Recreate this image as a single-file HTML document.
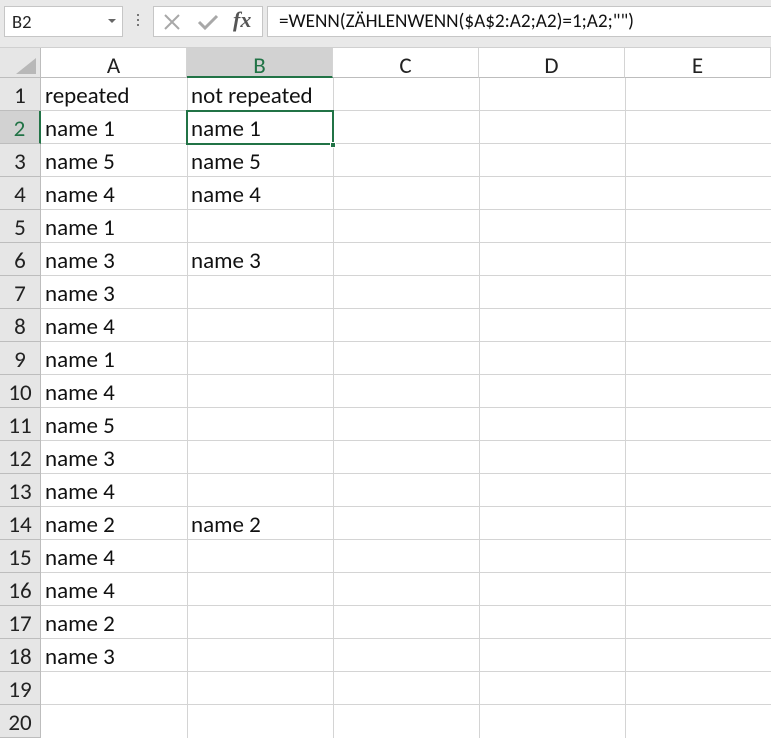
<!DOCTYPE html>
<html><head><meta charset="utf-8"><style>
*{margin:0;padding:0;box-sizing:border-box}
body{width:771px;height:738px;overflow:hidden;background:#fff;font-family:Calibri,"Liberation Sans","DejaVu Sans",sans-serif;position:relative}
.top{position:absolute;left:0;top:0;width:771px;height:48px;background:#e9e9e9;border-bottom:1px solid #d0d0d0}
.box{position:absolute;background:#fff;border:1px solid #c6c6c6}
.a{position:absolute}
.ch{position:absolute;top:48px;height:30px;border-right:1px solid #d4d4d4;border-bottom:1px solid #bdbdbd;text-align:center;font-size:23px;line-height:36px;color:#222;background:#fff}
.rh{position:absolute;left:0;width:41px;height:33px;background:#e6e6e6;border-bottom:1px solid #bdbdbd;border-right:1px solid #bdbdbd;text-align:center;font-size:23px;line-height:37px;color:#222}
.hl{position:absolute;left:41px;width:730px;height:1px;background:#d4d4d4}
.vl{position:absolute;top:78px;width:1px;height:660px;background:#d4d4d4}
.t{position:absolute;font-size:23px;line-height:37px;color:#111;white-space:nowrap}
</style></head><body>
<div class="top"></div>
<div class="box" style="left:4px;top:6px;width:119px;height:31px"><span class="a" style="left:7px;top:3px;font-size:18.5px;color:#222">B2</span><span class="a" style="right:6px;top:12px;width:0;height:0;border-left:4px solid transparent;border-right:4px solid transparent;border-top:4px solid #666"></span></div>
<div class="a" style="left:137px;top:14px;width:2px;height:2px;background:#777;box-shadow:0 5px 0 #777,0 10px 0 #777"></div>
<div class="box" style="left:153px;top:6px;width:110px;height:31px">
<svg class="a" style="left:9px;top:6px" width="18" height="18"><path d="M2 2L16 16M16 2L2 16" stroke="#a8a8a8" stroke-width="2"/></svg>
<svg class="a" style="left:43px;top:6px" width="22" height="18"><path d="M2 9L8 15L20 3" stroke="#a8a8a8" stroke-width="3" fill="none"/></svg>
<span class="a" style="left:79px;top:0px;font-family:'Liberation Serif',serif;font-style:italic;font-weight:bold;font-size:22px;color:#555">fx</span></div>
<div class="box" style="left:267px;top:6px;width:510px;height:31px"><span class="a" style="left:11px;top:3px;font-size:19.2px;color:#111">=WENN(ZÄHLENWENN($A$2:A2;A2)=1;A2;"")</span></div>

<div class="a" style="left:0;top:48px;width:41px;height:30px;background:#e6e6e6;border-right:1px solid #bdbdbd;border-bottom:1px solid #bdbdbd"></div>
<div class="a" style="left:16px;top:58px;width:0;height:0;border-left:20px solid transparent;border-bottom:16px solid #b8b8b8"></div>
<div class="ch" style="left:41px;width:146px">A</div>
<div class="ch" style="left:187px;width:146px;background:#d2d2d2;color:#217346;border-bottom:2px solid #217346">B</div>
<div class="ch" style="left:333px;width:146px">C</div>
<div class="ch" style="left:479px;width:146px">D</div>
<div class="ch" style="left:625px;width:146px">E</div>

<div class="vl" style="left:187px"></div><div class="vl" style="left:333px"></div><div class="vl" style="left:479px"></div><div class="vl" style="left:625px"></div>

<div class="rh" style="top:78px">1</div><div class="hl" style="top:110px"></div>
<div class="rh" style="top:111px;background:#d2d2d2;color:#217346;border-right:2px solid #217346">2</div><div class="hl" style="top:143px"></div>
<div class="rh" style="top:144px">3</div><div class="hl" style="top:176px"></div>
<div class="rh" style="top:177px">4</div><div class="hl" style="top:209px"></div>
<div class="rh" style="top:210px">5</div><div class="hl" style="top:242px"></div>
<div class="rh" style="top:243px">6</div><div class="hl" style="top:275px"></div>
<div class="rh" style="top:276px">7</div><div class="hl" style="top:308px"></div>
<div class="rh" style="top:309px">8</div><div class="hl" style="top:341px"></div>
<div class="rh" style="top:342px">9</div><div class="hl" style="top:374px"></div>
<div class="rh" style="top:375px">10</div><div class="hl" style="top:407px"></div>
<div class="rh" style="top:408px">11</div><div class="hl" style="top:440px"></div>
<div class="rh" style="top:441px">12</div><div class="hl" style="top:473px"></div>
<div class="rh" style="top:474px">13</div><div class="hl" style="top:506px"></div>
<div class="rh" style="top:507px">14</div><div class="hl" style="top:539px"></div>
<div class="rh" style="top:540px">15</div><div class="hl" style="top:572px"></div>
<div class="rh" style="top:573px">16</div><div class="hl" style="top:605px"></div>
<div class="rh" style="top:606px">17</div><div class="hl" style="top:638px"></div>
<div class="rh" style="top:639px">18</div><div class="hl" style="top:671px"></div>
<div class="rh" style="top:672px">19</div><div class="hl" style="top:704px"></div>
<div class="rh" style="top:705px">20</div>

<div class="t" style="left:45px;top:78px">repeated</div><div class="t" style="left:191px;top:78px">not repeated</div>
<div class="t" style="left:45px;top:111px">name 1</div><div class="t" style="left:191px;top:111px">name 1</div>
<div class="t" style="left:45px;top:144px">name 5</div><div class="t" style="left:191px;top:144px">name 5</div>
<div class="t" style="left:45px;top:177px">name 4</div><div class="t" style="left:191px;top:177px">name 4</div>
<div class="t" style="left:45px;top:210px">name 1</div>
<div class="t" style="left:45px;top:243px">name 3</div><div class="t" style="left:191px;top:243px">name 3</div>
<div class="t" style="left:45px;top:276px">name 3</div>
<div class="t" style="left:45px;top:309px">name 4</div>
<div class="t" style="left:45px;top:342px">name 1</div>
<div class="t" style="left:45px;top:375px">name 4</div>
<div class="t" style="left:45px;top:408px">name 5</div>
<div class="t" style="left:45px;top:441px">name 3</div>
<div class="t" style="left:45px;top:474px">name 4</div>
<div class="t" style="left:45px;top:507px">name 2</div><div class="t" style="left:191px;top:507px">name 2</div>
<div class="t" style="left:45px;top:540px">name 4</div>
<div class="t" style="left:45px;top:573px">name 4</div>
<div class="t" style="left:45px;top:606px">name 2</div>
<div class="t" style="left:45px;top:639px">name 3</div>

<div class="a" style="left:186px;top:110px;width:148px;height:35px;border:2px solid #217346"></div>
<div class="a" style="left:330px;top:142px;width:6px;height:6px;background:#217346;border:1px solid #fff"></div>
</body></html>
